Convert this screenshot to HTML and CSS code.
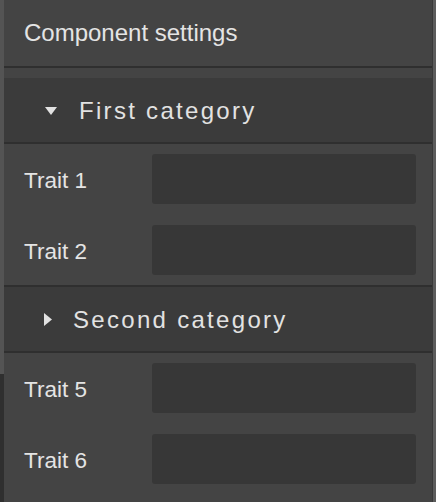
FILE: index.html
```html
<!DOCTYPE html>
<html>
<head>
<meta charset="utf-8">
<link rel="stylesheet" href="styles.css">
</head>
<body>
<div class="app">
  <div class="edge-left"></div>
  <div class="panel">
    <div class="panel-title">Component settings</div>
    <div class="category first">
      <div class="cat-head">
        <svg class="caret-down" width="12" height="8" viewBox="0 0 12 8"><path d="M0 0H12L6 8Z" fill="#e2e2e2"/></svg>
        <span class="cat-label">First category</span>
      </div>
      <div class="traits">
        <div class="trait"><span class="trait-label">Trait 1</span><div class="trait-input"></div></div>
        <div class="trait"><span class="trait-label">Trait 2</span><div class="trait-input"></div></div>
      </div>
    </div>
    <div class="category">
      <div class="cat-head">
        <svg class="caret-right" width="8" height="13" viewBox="0 0 8 13"><path d="M0 0V13L8 6.5Z" fill="#e2e2e2"/></svg>
        <span class="cat-label">Second category</span>
      </div>
      <div class="traits">
        <div class="trait"><span class="trait-label">Trait 5</span><div class="trait-input"></div></div>
        <div class="trait"><span class="trait-label">Trait 6</span><div class="trait-input"></div></div>
      </div>
    </div>
  </div>
  <div class="edge-right"></div>
</div>
</body>
</html>
```

FILE: styles.css
```css
html, body {
  margin: 0;
  padding: 0;
  background: #444444;
}
body {
  font-family: "Liberation Sans", Arial, Helvetica, sans-serif;
  color: #e4e4e4;
}
.app {
  display: flex;
  width: 436px;
  height: 502px;
  overflow: hidden;
}
.edge-left {
  width: 4px;
  flex: none;
  background: linear-gradient(#545454 0, #545454 374px, #2f2f2f 374px);
}
.edge-right {
  width: 3px;
  flex: none;
  background: #5c5c5c;
  border-left: 1px solid #3a3a3a;
}
.panel {
  flex: 1;
  background: #444444;
  display: flex;
  flex-direction: column;
}
.panel-title {
  height: 66px;
  line-height: 66px;
  padding-left: 20px;
  font-size: 24px;
  border-bottom: 2px solid #2f2f2f;
}
.category.first {
  margin-top: 10px;
}
.cat-head {
  height: 64px;
  background: #3b3b3b;
  border-bottom: 2px solid #2f2f2f;
  display: flex;
  align-items: center;
  padding-left: 40px;
}
.caret-down {
  margin-left: 1px;
  margin-right: 22px;
  margin-top: 2px;
}
.caret-right {
  margin-right: 21px;
}
.cat-label {
  font-size: 24px;
  letter-spacing: 2.3px;
  color: #e2e2e2;
  padding-top: 2px;
}
.traits {
  display: flex;
  flex-direction: column;
  gap: 21px;
  padding: 10px 16px 10px 20px;
  border-bottom: 2px solid #2f2f2f;
}
.category:last-child .traits {
  border-bottom: none;
}
.trait {
  display: flex;
  align-items: center;
  height: 50px;
}
.trait-label {
  width: 128px;
  font-size: 22.5px;
  color: #e4e4e4;
  padding-top: 3px;
}
.trait-input {
  flex: 1;
  height: 50px;
  background: #373737;
  border-radius: 3px;
}
```
